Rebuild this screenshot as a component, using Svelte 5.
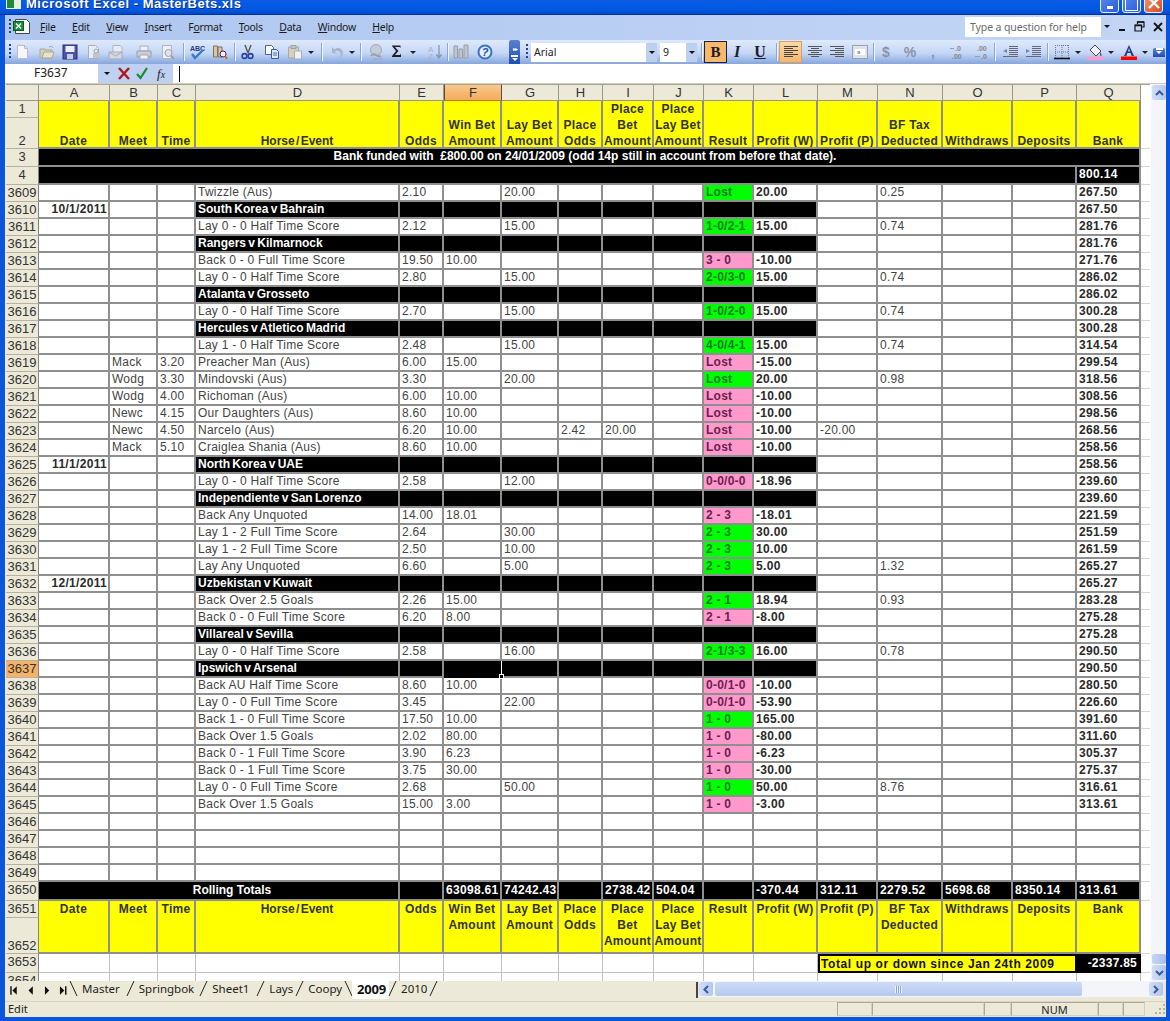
<script>
  const widths = [33, 71, 48, 38, 204, 44, 58, 57, 44, 51, 50, 50, 64, 60, 65, 70, 64, 64, 9];
  const letters = 'ABCDEFGHIJKLMNOPQ'.split('');
  const gridCols = widths.map((w) => w + 'px').join(' ');

  const heads = ['Date', 'Meet', 'Time', 'Horse / Event', 'Odds', 'Win Bet\nAmount', 'Lay Bet\nAmount', 'Place\nOdds', 'Place\nBet\nAmount', 'Place\nLay Bet\nAmount', 'Result', 'Profit (W)', 'Profit (P)', 'BF Tax\nDeducted', 'Withdraws', 'Deposits', 'Bank'];

  function bet(n, desc, odds, win, lay, result, tone, profit, tax, bank, x = {}) {
    return { n, cells: ['', x.meet ?? '', x.time ?? '', desc, odds, win, lay, x.pOdds ?? '', x.pBet ?? '', '', result, profit, x.pW ?? '', tax, '', '', bank], tone };
  }
  function match(n, name, bank, date = '') {
    return { n, match: true, cells: [date, '', '', name, '', '', '', '', '', '', '', '', '', '', '', '', bank] };
  }

  const rows = [
    bet(3609, 'Twizzle (Aus)', '2.10', '', '20.00', 'Lost', 'g', '20.00', '0.25', '267.50'),
    match(3610, 'South Korea v Bahrain', '267.50', '10/1/2011'),
    bet(3611, 'Lay 0 - 0 Half Time Score', '2.12', '', '15.00', '1-0/2-1', 'g', '15.00', '0.74', '281.76'),
    match(3612, 'Rangers v Kilmarnock', '281.76'),
    bet(3613, 'Back 0 - 0 Full Time Score', '19.50', '10.00', '', '3 - 0', 'p', '-10.00', '', '271.76'),
    bet(3614, 'Lay 0 - 0 Half Time Score', '2.80', '', '15.00', '2-0/3-0', 'g', '15.00', '0.74', '286.02'),
    match(3615, 'Atalanta v Grosseto', '286.02'),
    bet(3616, 'Lay 0 - 0 Half Time Score', '2.70', '', '15.00', '1-0/2-0', 'g', '15.00', '0.74', '300.28'),
    match(3617, 'Hercules v Atletico Madrid', '300.28'),
    bet(3618, 'Lay 1 - 0 Half Time Score', '2.48', '', '15.00', '4-0/4-1', 'g', '15.00', '0.74', '314.54'),
    bet(3619, 'Preacher Man (Aus)', '6.00', '15.00', '', 'Lost', 'p', '-15.00', '', '299.54', { meet: 'Mack', time: '3.20' }),
    bet(3620, 'Mindovski (Aus)', '3.30', '', '20.00', 'Lost', 'g', '20.00', '0.98', '318.56', { meet: 'Wodg', time: '3.30' }),
    bet(3621, 'Richoman (Aus)', '6.00', '10.00', '', 'Lost', 'p', '-10.00', '', '308.56', { meet: 'Wodg', time: '4.00' }),
    bet(3622, 'Our Daughters (Aus)', '8.60', '10.00', '', 'Lost', 'p', '-10.00', '', '298.56', { meet: 'Newc', time: '4.15' }),
    bet(3623, 'Narcelo (Aus)', '6.20', '10.00', '', 'Lost', 'p', '-10.00', '', '268.56', { meet: 'Newc', time: '4.50', pOdds: '2.42', pBet: '20.00', pW: '-20.00' }),
    bet(3624, 'Craiglea Shania (Aus)', '8.60', '10.00', '', 'Lost', 'p', '-10.00', '', '258.56', { meet: 'Mack', time: '5.10' }),
    match(3625, 'North Korea v UAE', '258.56', '11/1/2011'),
    bet(3626, 'Lay 0 - 0 Half Time Score', '2.58', '', '12.00', '0-0/0-0', 'p', '-18.96', '', '239.60'),
    match(3627, 'Independiente v San Lorenzo', '239.60'),
    bet(3628, 'Back Any Unquoted', '14.00', '18.01', '', '2 - 3', 'p', '-18.01', '', '221.59'),
    bet(3629, 'Lay 1 - 2 Full Time Score', '2.64', '', '30.00', '2 - 3', 'g', '30.00', '', '251.59'),
    bet(3630, 'Lay 1 - 2 Full Time Score', '2.50', '', '10.00', '2 - 3', 'g', '10.00', '', '261.59'),
    bet(3631, 'Lay Any Unquoted', '6.60', '', '5.00', '2 - 3', 'g', '5.00', '1.32', '265.27'),
    match(3632, 'Uzbekistan v Kuwait', '265.27', '12/1/2011'),
    bet(3633, 'Back Over 2.5 Goals', '2.26', '15.00', '', '2 - 1', 'g', '18.94', '0.93', '283.28'),
    bet(3634, 'Back 0 - 0 Full Time Score', '6.20', '8.00', '', '2 - 1', 'p', '-8.00', '', '275.28'),
    match(3635, 'Villareal v Sevilla', '275.28'),
    bet(3636, 'Lay 0 - 0 Half Time Score', '2.58', '', '16.00', '2-1/3-3', 'g', '16.00', '0.78', '290.50'),
    match(3637, 'Ipswich v Arsenal', '290.50'),
    bet(3638, 'Back AU Half Time Score', '8.60', '10.00', '', '0-0/1-0', 'p', '-10.00', '', '280.50'),
    bet(3639, 'Lay 0 - 0 Full Time Score', '3.45', '', '22.00', '0-0/1-0', 'p', '-53.90', '', '226.60'),
    bet(3640, 'Back 1 - 0 Full Time Score', '17.50', '10.00', '', '1 - 0', 'g', '165.00', '', '391.60'),
    bet(3641, 'Back Over 1.5 Goals', '2.02', '80.00', '', '1 - 0', 'p', '-80.00', '', '311.60'),
    bet(3642, 'Back 0 - 1 Full Time Score', '3.90', '6.23', '', '1 - 0', 'p', '-6.23', '', '305.37'),
    bet(3643, 'Back 0 - 1 Full Time Score', '3.75', '30.00', '', '1 - 0', 'p', '-30.00', '', '275.37'),
    bet(3644, 'Lay 0 - 0 Full Time Score', '2.68', '', '50.00', '1 - 0', 'g', '50.00', '8.76', '316.61'),
    bet(3645, 'Back Over 1.5 Goals', '15.00', '3.00', '', '1 - 0', 'p', '-3.00', '', '313.61'),
    ...[3646, 3647, 3648, 3649].map((n) => ({ n, cells: Array(17).fill('') }))
  ];

  const totals = ['', '63098.61', '74242.43', '', '2738.42', '504.04', '', '-370.44', '312.11', '2279.52', '5698.68', '8350.14', '313.61'];

  const icons = {
    new: '<path d="M2.5 1.5h7l3 3v10h-10z" fill="#f4f6fa" stroke="#b8bcc8"/><path d="M9.5 1.5v3h3" fill="none" stroke="#b8bcc8"/>',
    open: '<path d="M1 5h5l1 1h6v8H1z" fill="#d8cfa8" stroke="#a8a8a8"/><path d="M3 14l2-6h10l-2 6z" fill="#e8e2c8" stroke="#a8a8a8"/><path d="M10 3q3-2 4 1" fill="none" stroke="#9ab"/>',
    save: '<rect x="1" y="1" width="14" height="14" fill="#4a54a8" stroke="#2a2f70"/><rect x="3.5" y="2" width="9" height="6" fill="#eef"/><rect x="5" y="10" width="6" height="5" fill="#ccd"/>',
    perm: '<path d="M2.5 1.5h7l3 3v10h-10z" fill="#e8ecf4" stroke="#a8b0bc"/><path d="M7 9h7v5H7z" fill="#c0c4cc"/><circle cx="10" cy="7" r="2" fill="none" stroke="#a0a4b0"/>',
    email: '<path d="M5 1.5h7l2 2v6H5z" fill="#e8ecf4" stroke="#b0b4c0"/><path d="M1 8h13v7H1z" fill="#d4d8e0" stroke="#a8acb8"/><path d="M1 8l6.5 4L14 8" fill="none" stroke="#a8acb8"/>',
    print: '<path d="M4 2h8v5H4z" fill="#eef" stroke="#aab"/><path d="M1 7h14v6H1z" fill="#c8ccd4" stroke="#9a9ea8"/><path d="M4 11h8v4H4z" fill="#f2f4f8" stroke="#aab"/>',
    preview: '<path d="M2.5 1.5h9v13h-9z" fill="#eef1f6" stroke="#b0b4c0"/><circle cx="8.5" cy="9" r="3.5" fill="#dfe4ec" stroke="#9aa0ac"/><path d="M11 12l3 3" stroke="#9aa0ac" stroke-width="2"/>',
    spell: '<text x="1" y="7" font-size="7" font-weight="700" font-family="Liberation Sans" fill="#2a3a80">ABC</text><path d="M3 10l3 4 8-8" fill="none" stroke="#3878c8" stroke-width="2.4"/>',
    research: '<path d="M1.5 2h4v11h-4zM6 3h4v10H6z" fill="#d8c8a0" stroke="#807060"/><circle cx="11" cy="10" r="3" fill="#dff" stroke="#608"/><path d="M13 12l2 3" stroke="#a88020" stroke-width="2"/>',
    cut: '<path d="M5 1l3 8M11 1L8 9" stroke="#555" stroke-width="1.4"/><circle cx="4.5" cy="12" r="2.4" fill="none" stroke="#2840a8" stroke-width="1.6"/><circle cx="10.5" cy="12" r="2.4" fill="none" stroke="#2840a8" stroke-width="1.6"/>',
    copy: '<path d="M1.5 1.5h6l2 2v7h-8z" fill="#fff" stroke="#5060a0"/><path d="M7.5 5.5h5l2 2v7h-7z" fill="#dde8ff" stroke="#3858a8"/><path d="M9 9h4M9 11h4" stroke="#5068a8"/>',
    paste: '<path d="M1.5 3h10v11h-10z" fill="#d8d0b8" stroke="#a8a8a8"/><path d="M4 1.5h5v3H4z" fill="#c0c4cc" stroke="#a0a0a8"/><path d="M7.5 7h7v8h-7z" fill="#eef1f6" stroke="#a8b0bc"/>',
    undo: '<path d="M3 9V3l2.5 2.5Q9 3 12 5t1 7l-2 2q2-5-1-6.500T6 8l3 1.500z" fill="#a8b4c8"/>',
    link: '<circle cx="8" cy="6" r="5.500" fill="#c4ccd8" stroke="#a0a8b8"/><path d="M3 12q2-3 5-1t5 1" fill="none" stroke="#98a0b0" stroke-width="2"/><path d="M5 15h9" stroke="#a8b0bc" stroke-width="2"/>',
    sigma: '<path d="M1 1.500h8.500V4L8.500 3H4l3.500 4L4 11h5l1-1.500V13H1v-1l4-5-4-5z" fill="#222"/>',
    sort: '<text x="2" y="7.500" font-size="8" font-family="Liberation Sans" fill="#a8b0c0">A</text><text x="2" y="15" font-size="8" font-family="Liberation Sans" fill="#a8b0c0">Z</text><path d="M13 1v12M10.500 10.500l2.500 3.500 2.500-3.500" fill="none" stroke="#8c94a8" stroke-width="1.300"/>',
    chart: '<path d="M1 2h3.500v12H1zM6 5h3.500v9H6zM11 1h4v13h-4z" fill="#c0c4cc" stroke="#9a9ea8"/>',
    help: '<circle cx="8" cy="8" r="6.500" fill="#e4eefc" stroke="#3a70c8" stroke-width="2"/><text x="4.800" y="12" font-size="11" font-weight="700" font-style="italic" font-family="Liberation Sans" fill="#2050b0">?</text>',
    alignL: '<path d="M1 2.500h14M1 4.500h9M1 6.500h14M1 8.500h9M1 10.500h14M1 12.500h9" stroke="#444" fill="none"/>',
    alignC: '<path d="M1 2.500h14M4 4.500h8M1 6.500h14M4 8.500h8M1 10.500h14M4 12.500h8" stroke="#555" fill="none"/>',
    alignR: '<path d="M1 2.500h14M6 4.500h9M1 6.500h14M6 8.500h9M1 10.500h14M6 12.500h9" stroke="#555" fill="none"/>',
    merge: '<rect x=".5" y="1.500" width="15" height="13" fill="#dfe3ea" stroke="#9aa0ac"/><rect x="3" y="5" width="10" height="6" fill="#fff"/><text x="5" y="10" font-size="6" fill="#667" font-family="Liberation Sans">a</text>',
    incDec: '<text x="5" y="7" font-size="7" font-weight="700" font-family="Liberation Sans" fill="#888">.0</text><text x="2" y="15" font-size="7" font-weight="700" font-family="Liberation Sans" fill="#888">.00</text><path d="M0 4.500h4" stroke="#8aa0c0"/>',
    decDec: '<text x="3" y="7" font-size="7" font-weight="700" font-family="Liberation Sans" fill="#888">.00</text><text x="7" y="15" font-size="7" font-weight="700" font-family="Liberation Sans" fill="#888">.0</text><path d="M1 12.500h5" stroke="#8aa0c0"/>',
    outdent: '<path d="M7 2.500h9M7 4.500h9M7 6.500h9M7 8.500h9M7 10.500h9M1 12.500h15" stroke="#667" fill="none"/><path d="M5 5v4L1 7z" fill="#7088b0"/>',
    indent: '<path d="M7 2.500h9M7 4.500h9M7 6.500h9M7 8.500h9M7 10.500h9M1 12.500h15" stroke="#667" fill="none"/><path d="M1 5v4l4-2z" fill="#7088b0"/>',
    borders: '<path d="M1 1.500h14M1 8h14M1.500 1v13M8 1v13M14.500 1v13" stroke="#778" stroke-dasharray="1 1" fill="none"/><path d="M0 14.500h16" stroke="#111" stroke-width="1.600"/>',
    fill: '<path d="M8 1l6 6-5 5-6-6z" fill="#eef2fa" stroke="#445"/><path d="M13 8q2 2 1.500 3.500T13 11z" fill="#555"/><rect y="12.500" width="16" height="3.500" fill="#ff99cc"/>',
    color: '<path d="M8 1L3 12h2.400l1-3h3.200l1 3H13zM7 7.500L8 4l1 3.500z" fill="#2a3a80"/><rect y="12.500" width="16" height="3.500" fill="#f00"/>'
  };

  // [name, left x, right x] on the window; flow margins are derived from the gaps
  function place(list, start) {
    let prev = start;
    return list.map(([name, x0, x1]) => {
      const item = { name, w: x1 - x0, gap: x0 - prev };
      prev = x1;
      return item;
    });
  }

  const leftTools = place([
    ['grip', 9, 11], ['new', 16, 30], ['open', 39, 55], ['save', 62, 78], ['perm', 86, 102], ['email', 108, 124], ['print', 136, 152], ['preview', 160, 176], ['sep', 183, 184],
    ['spell', 189, 205], ['research', 212, 228], ['sep', 234, 235], ['cut', 241, 255], ['copy', 264, 280], ['paste', 287, 303], ['drop', 308, 314], ['sep', 321, 322],
    ['undo', 329, 345], ['drop', 349, 355], ['sep', 360, 361], ['link', 368, 384], ['sigma', 393, 405], ['drop', 410, 416], ['sort', 426, 442], ['sep', 447, 448], ['chart', 453, 469], ['help', 477, 493]
  ], 5);

  const rightTools = place([
    ['sep', 702, 703], ['bold', 705, 728], ['italic', 730, 746], ['under', 752, 770], ['sep', 777, 778], ['alignL', 780, 803], ['alignC', 808, 824], ['alignR', 830, 846], ['merge', 853, 869], ['sep', 874, 875],
    ['dollar', 881, 893], ['pct', 904, 918], ['comma', 930, 938], ['incDec', 950, 968], ['decDec', 975, 991], ['sep', 995, 996], ['outdent', 1002, 1020], ['indent', 1025, 1043], ['sep', 1048, 1049],
    ['borders', 1055, 1071], ['drop', 1076, 1082], ['fill', 1088, 1104], ['drop', 1109, 1115], ['color', 1122, 1138], ['drop', 1143, 1149]
  ], 698);

  const menus = [['F', 'ile'], ['E', 'dit'], ['V', 'iew'], ['I', 'nsert'], ['Fo', 'rmat', 1], ['T', 'ools'], ['D', 'ata'], ['W', 'indow'], ['H', 'elp']];
  // name, space left before the next slash
  const tabs = [['Master', 7], ['Springbok', 6], ['Sheet1', 8], ['Lays', 3], ['Coopy', 3], ['2009', 3], ['2010', 3]];
</script>

{#snippet tool(t)}
  {#if t.name === 'sep'}
    <span class="sep" style="margin-left:{t.gap}px"></span>
  {:else if t.name === 'grip'}
    <span class="grip" style="margin-left:{t.gap}px"></span>
  {:else if t.name === 'drop'}
    <span class="drop" style="margin-left:{t.gap}px;width:{t.w}px"></span>
  {:else if t.name === 'bold'}
    <span class="tool txt hot b" style="margin-left:{t.gap}px;width:{t.w}px">B</span>
  {:else if t.name === 'italic'}
    <span class="tool txt i" style="margin-left:{t.gap}px;width:{t.w}px">I</span>
  {:else if t.name === 'under'}
    <span class="tool txt u" style="margin-left:{t.gap}px;width:{t.w}px">U</span>
  {:else if t.name === 'dollar' || t.name === 'pct' || t.name === 'comma'}
    <span class="tool txt fade" style="margin-left:{t.gap}px;width:{t.w}px">{t.name === 'dollar' ? '$' : t.name === 'pct' ? '%' : ','}</span>
  {:else}
    <span class="tool" class:warm={t.name === 'alignL'} style="margin-left:{t.gap}px;width:{t.w}px">
      <svg width="16" height="16" viewBox="0 0 16 16">{@html icons[t.name]}</svg>
    </span>
  {/if}
{/snippet}

<div class="window">
  <header class="title">
    <svg class="app-icon" width="15" height="9" viewBox="0 7 15 9"><rect x="0" y="0" width="15" height="16" fill="#e8f0e0"/><rect x="1" y="7" width="7" height="8" fill="#1f8a3c"/></svg>
    <span class="title-text">Microsoft Excel - MasterBets.xls</span>
    <div class="win-btns">
      <span class="win-btn"><i class="min"></i></span>
      <span class="win-btn"><i class="max"></i></span>
      <span class="win-btn close">
        <svg width="14" height="10" viewBox="0 0 14 10"><path d="M2 -1l10 10M12 -1L2 9" stroke="#fff" stroke-width="2.400"/></svg>
      </span>
    </div>
  </header>

  <div class="inner">
    <nav class="menubar">
      <span class="grip menu-grip"></span>
      <svg class="doc-icon" width="18" height="17" viewBox="0 0 18 17">
        <path d="M2.500 1.500h11l3 3v11h-14z" fill="#f4f6f8" stroke="#445"/>
        <rect x="0.500" y="3.500" width="10" height="9" fill="#1f8a3c" stroke="#0c5a20"/>
        <path d="M3 5.500l5 5M8 5.500l-5 5" stroke="#fff" stroke-width="1.300"/>
      </svg>
      <div class="menus">
        {#each menus as m}
          <span class="menu">{#if m[2]}F<u>o</u>{m[1]}{:else}<u>{m[0]}</u>{m[1]}{/if}</span>
        {/each}
      </div>
      <div class="help-box">
        <span>Type a question for help</span>
        <span class="help-drop"><b class="tri"></b></span>
      </div>
      <div class="doc-btns">
        <i class="d-min"></i>
        <svg width="11" height="11" viewBox="0 0 11 11"><path d="M3.500 3V1H10v5H8M1 4h6.500v6H1z" fill="none" stroke="#111" stroke-width="1.200"/><path d="M3 1h7M1 4.500h6" stroke="#111" stroke-width="1.600"/></svg>
        <svg width="10" height="10" viewBox="0 0 10 10"><path d="M1 1l8 8M9 1L1 9" stroke="#111" stroke-width="1.800"/></svg>
      </div>
    </nav>

    <div class="toolbar">
      <div class="tools">
        {#each leftTools as t}{@render tool(t)}{/each}
      </div>
      <div class="chevrons"><span class="chev-top">▸▸</span><b class="chev-bar"></b><b class="tri white"></b></div>
      <div class="fontbar">
        <span class="grip"></span>
        <div class="combo font"><span>Arial</span><span class="combo-btn"><b class="tri"></b></span></div>
        <div class="combo size"><span>9</span><span class="combo-btn"><b class="tri"></b></span></div>
        <div class="tools tight">
          {#each rightTools as t}{@render tool(t)}{/each}
        </div>
        <div class="chevrons end"><b class="chev-bar"></b><b class="tri white"></b></div>
      </div>
    </div>

    <div class="formula">
      <div class="namebox">F3637</div>
      <div class="name-drop"><b class="tri"></b></div>
      <div class="fx-btns">
        <svg width="14" height="13" viewBox="0 0 14 13"><path d="M2 1l10 11M12 1L2 12" stroke="#b01818" stroke-width="2.400"/></svg>
        <svg width="14" height="13" viewBox="0 0 14 13"><path d="M2 7l3.500 4L12 1" fill="none" stroke="#1c8a2c" stroke-width="2.200"/></svg>
        <span class="fx">f<small>x</small></span>
      </div>
      <div class="entry"><span class="caret"></span></div>
    </div>

    <div class="sheet-area">
      <div class="sheet" style="grid-template-columns:{gridCols}">
        <div class="ch corner"></div>
        {#each letters as l}
          <div class="ch" class:active={l === 'F'}>{l}</div>
        {/each}
        <div class="ch none"></div>

        <div class="rh">1</div>
        {#each heads as h}
          <div class="c yellow head bottom span2"><span class="head-text" class:narrow={h.includes('/')}>{h}</span></div>
        {/each}
        <div class="c fill span2"></div>
        <div class="rh bottom-n">2</div>

        <div class="rh tall">3</div>
        <div class="c black banner funded tall wide">Bank funded with &nbsp;£800.00 on 24/01/2009 (odd 14p still in account from before that date).</div>
        <div class="c fill tall"></div>

        <div class="rh tall">4</div>
        <div class="c black span16 tall"></div>
        <div class="c black bold tall">800.14</div>
        <div class="c fill tall"></div>

        {#each rows as r}
          <div class="rh" class:hot-row={r.n === 3637}>{r.n}</div>
          {#each r.cells as v, i}
            <div
              class="c"
              class:black={r.match && i >= 3 && i <= 11}
              class:bold={(r.match && i === 3) || i === 11 || i === 16 || i === 0}
              class:fixture={r.match && i === 3}
              class:right={i === 0}
              class:res={i === 10 && r.tone}
              class:green={i === 10 && r.tone === 'g'}
              class:pink={i === 10 && r.tone === 'p'}
              class:sel={r.n === 3637 && i === 5}
            >{v}{#if r.n === 3637 && i === 5}<span class="handle"></span>{/if}</div>
          {/each}
          <div class="c fill"></div>
        {/each}

        <div class="rh t19">3650</div>
        <div class="c black banner rolling span4 t19">Rolling Totals</div>
        {#each totals as v}
          <div class="c black bold t19 total">{v}</div>
        {/each}
        <div class="c fill t19"></div>

        <div class="rh">3651</div>
        {#each heads as h}
          <div class="c yellow head span2"><span class="head-text" class:narrow={h.includes('/')}>{h}</span></div>
        {/each}
        <div class="c fill span2"></div>
        <div class="rh bottom-n">3652</div>

        <div class="rh t19">3653</div>
        {#each Array(12) as _}
          <div class="c thin t19"></div>
        {/each}
        <div class="c summary span4 t19">Total up or down since Jan 24th 2009</div>
        <div class="c sum-val t19">-2337.85</div>
        <div class="c fill t19"></div>

        <div class="rh">3654</div>
        {#each Array(17) as _}
          <div class="c thin"></div>
        {/each}
        <div class="c fill"></div>
      </div>

      <div class="vscroll">
        <span class="sb-btn"><svg width="9" height="6" viewBox="0 0 9 6"><path d="M1 5l3.500-3.500L8 5" fill="none" stroke="#3c5a96" stroke-width="2"/></svg></span>
        <span class="v-track"></span>
        <span class="v-thumb"></span>
        <span class="sb-btn"><svg width="9" height="6" viewBox="0 0 9 6"><path d="M1 1l3.500 3.500L8 1" fill="none" stroke="#3c5a96" stroke-width="2"/></svg></span>
      </div>
    </div>

    <div class="tabbar">
      <div class="tab-nav">
        <svg width="8" height="9" viewBox="0 0 8 9"><path d="M1 0v9" stroke="#111" stroke-width="1.500"/><path d="M7 0v9L2.500 4.500z" fill="#111"/></svg>
        <svg width="6" height="9" viewBox="0 0 6 9"><path d="M5 0v9L.5 4.500z" fill="#111"/></svg>
        <svg width="6" height="9" viewBox="0 0 6 9"><path d="M1 0v9l4.500-4.500z" fill="#111"/></svg>
        <svg width="8" height="9" viewBox="0 0 8 9"><path d="M7 0v9" stroke="#111" stroke-width="1.500"/><path d="M1 0v9l4.500-4.500z" fill="#111"/></svg>
      </div>
      <div class="tabs">
        {#each tabs as [t, pad], i}
          {#if i === 0}
            <svg class="slash" width="9" height="18" viewBox="0 0 9 18"><path d="M1 0l7 15" stroke="#222" fill="none"/></svg>
          {/if}
          <span class="tab" class:active={t === '2009'} style="padding-right:{pad}px">{t}</span>
          <svg class="slash" width="9" height="18" viewBox="0 0 9 18"><path d={t === 'Coopy' ? 'M1 0l7 15' : 'M8 0L1 15'} stroke="#222" fill="none"/></svg>
        {/each}
      </div>
      <span class="split"></span>
      <div class="hscroll">
        <span class="sb-btn h"><svg width="6" height="9" viewBox="0 0 6 9"><path d="M5 1L1.500 4.500 5 8" fill="none" stroke="#3c5a96" stroke-width="2"/></svg></span>
        <span class="h-thumb"><i></i></span>
        <span class="h-rest"></span>
        <span class="sb-btn h"><svg width="6" height="9" viewBox="0 0 6 9"><path d="M1 1l3.500 3.500L1 8" fill="none" stroke="#3c5a96" stroke-width="2"/></svg></span>
      </div>
    </div>

    <footer class="status">
      <span class="status-text">Edit</span>
      <div class="panes">
        <span class="pane p1"></span>
        <span class="pane p2"></span>
        <span class="pane p3"></span>
        <span class="pane p4">NUM</span>
        <span class="pane p5"></span>
        <span class="pane p6"></span>
        <svg class="size-grip" width="14" height="14" viewBox="0 0 14 14"><path d="M11 2h2v2h-2zM7 6h2v2H7zM11 6h2v2h-2zM3 10h2v2H3zM7 10h2v2H7zM11 10h2v2h-2z" fill="#b4b09e"/></svg>
      </div>
    </footer>
  </div>
</div>

<style>
  :global(body) {
    margin: 0;
    background: #0054e3;
  }

  .window {
    width: 1170px;
    height: 1021px;
    display: flex;
    flex-direction: column;
    overflow: hidden;
    background: #0a55dc;
    font-family: "Liberation Sans", Arial, sans-serif;
  }

  .title {
    height: 14px;
    flex: none;
    display: flex;
    align-items: flex-start;
    padding-left: 6px;
    background: linear-gradient(#0a5ce6, #0058e2 70%, #0449c8);
    border-bottom: 1px solid #0033a0;
    color: #fff;
    overflow: hidden;
  }

  .title-text {
    margin: -4px 0 0 5px;
    font: bold 13px/16px "Liberation Sans", Arial, sans-serif;
    letter-spacing: 0.5px;
    text-shadow: 1px 1px 0 #0a2a80;
  }

  .win-btns {
    margin: -6px 4px 0 auto;
    display: flex;
    gap: 3px;
    padding-right: 3px;
  }

  .win-btn {
    width: 19px;
    height: 19px;
    box-sizing: border-box;
    border: 1px solid #e8eefc;
    border-radius: 3px;
    background: linear-gradient(135deg, #5a8cf0, #2a5ad8);
    display: flex;
    align-items: center;
    justify-content: center;
  }

  .win-btn.close {
    background: linear-gradient(135deg, #f09a70, #d84a20);
  }

  .min {
    width: 6px;
    height: 3px;
    background: #fff;
    margin-top: 7px;
  }

  .max {
    width: 11px;
    height: 10px;
    border: 1px solid #fff;
    border-top-width: 2px;
    margin-top: 2px;
  }

  .inner {
    flex: 1;
    min-height: 0;
    margin: 0 4px 4px 5px;
    display: flex;
    flex-direction: column;
    background: #ece9d8;
  }

  .menubar {
    height: 25px;
    flex: none;
    box-sizing: border-box;
    padding-bottom: 2px;
    display: flex;
    align-items: center;
    background: linear-gradient(90deg, #aec6ef, #c3d6f6);
    color: #1a1a1a;
    font: 10.5px "Noto Sans", sans-serif;
    letter-spacing: -0.3px;
  }

  .menu-grip {
    margin-left: 4px;
  }

  .doc-icon {
    margin-left: 2px;
  }

  .menus {
    display: flex;
    margin-left: 9px;
    gap: 16.5px;
  }

  .help-box {
    margin-left: auto;
    width: 147px;
    height: 20px;
    box-sizing: border-box;
    display: flex;
    align-items: center;
    justify-content: space-between;
    padding-left: 5px;
    background: #fff;
    color: #6a6a6a;
    font-size: 10.5px;
    letter-spacing: -0.1px;
  }

  .help-drop {
    width: 11px;
    height: 100%;
    background: #c1d3f2;
    display: flex;
    align-items: center;
    justify-content: center;
  }

  .doc-btns {
    width: 54px;
    display: flex;
    align-items: center;
    gap: 8px;
    padding-left: 7px;
    box-sizing: border-box;
  }

  .d-min {
    width: 6px;
    height: 2px;
    background: #111;
    margin: 6px 1px 0 0;
  }

  .tri {
    display: block;
    width: 0;
    height: 0;
    border-left: 3px solid transparent;
    border-right: 3px solid transparent;
    border-top: 3px solid #111;
  }

  .tri.white {
    border-top-color: #fff;
  }

  .toolbar {
    height: 24px;
    flex: none;
    display: flex;
    background: linear-gradient(#dfe9fb, #c4d7f6 55%, #86a6dc);
    align-items: stretch;
  }

  .tools {
    display: flex;
    align-items: center;
    flex: none;
    width: 504px;
  }

  .tools.tight {
    width: auto;
  }

  .grip {
    display: block;
    width: 2px;
    height: 16px;
    flex: none;
    background: repeating-linear-gradient(#24448c 0 2px, transparent 2px 4px);
  }

  .sep {
    width: 1px;
    height: 18px;
    flex: none;
    background: #8aa6d6;
    box-shadow: 1px 0 0 #eef4ff;
  }

  .tool {
    height: 22px;
    flex: none;
    display: flex;
    align-items: center;
    justify-content: center;
    box-sizing: border-box;
  }

  .tool svg {
    display: block;
    overflow: visible;
  }

  .tool.warm {
    background: linear-gradient(#fbd9a8, #f7b56a);
    border: 1px solid #d8a060;
  }

  .txt {
    font-family: "Liberation Serif", serif;
    font-size: 16px;
    font-weight: 700;
    color: #1a1a30;
  }

  .hot {
    background: #f8b868;
    border: 1px solid #10205a;
    font-size: 15px;
  }

  .i {
    font-style: italic;
  }

  .u {
    text-decoration: underline;
  }

  .fade {
    font-family: "Liberation Sans", sans-serif;
    font-size: 14px;
    color: #8a93a8;
  }

  .drop {
    height: 3px;
    flex: none;
    box-sizing: border-box;
    border-left: 3px solid transparent;
    border-right: 3px solid transparent;
    border-top: 3px solid #222;
  }

  .chevrons {
    width: 11px;
    flex: none;
    display: flex;
    flex-direction: column;
    align-items: center;
    justify-content: flex-end;
    padding-bottom: 3px;
    box-sizing: border-box;
    background: linear-gradient(#5a82d0, #1f4db0);
    border-radius: 2px 2px 0 0;
    color: #fff;
  }

  .chevrons.end {
    width: 12px;
    margin-left: 5px;
  }

  .chev-top {
    font-size: 6px;
    line-height: 6px;
    margin-bottom: 3px;
    letter-spacing: -1px;
  }

  .chev-bar {
    display: block;
    width: 7px;
    height: 2px;
    background: #fff;
    margin-bottom: 1px;
  }

  .fontbar {
    flex: 1;
    display: flex;
    align-items: center;
    margin-left: 6px;
  }

  .combo {
    height: 19px;
    background: #fff;
    display: flex;
    align-items: center;
    justify-content: space-between;
    padding-left: 3px;
    box-sizing: border-box;
    font: 10.5px "Noto Sans", sans-serif;
    color: #222;
    flex: none;
  }

  .combo.font {
    width: 126px;
    margin-left: 3px;
  }

  .combo.size {
    width: 37px;
    margin-left: 3px;
  }

  .combo-btn {
    width: 11px;
    height: 100%;
    background: #bdd0f0;
    display: flex;
    align-items: center;
    justify-content: center;
  }

  .formula {
    height: 19px;
    flex: none;
    display: flex;
    align-items: stretch;
    background: #fff;
    border-bottom: 1px solid #d0cdbc;
    font: 12px "Noto Sans", sans-serif;
    color: #222;
  }

  .namebox {
    width: 93px;
    padding-left: 29px;
    box-sizing: border-box;
    line-height: 18px;
  }

  .name-drop {
    width: 17px;
    background: #bed1f2;
    display: flex;
    align-items: center;
    justify-content: center;
  }

  .fx-btns {
    width: 58px;
    background: #bed1f2;
    display: flex;
    align-items: center;
    gap: 4px;
    padding-left: 2px;
    box-sizing: border-box;
  }

  .fx {
    margin-left: 4px;
    font: italic 13px "Liberation Serif", serif;
    color: #222;
  }

  .fx small {
    font-size: 10px;
  }

  .entry {
    flex: 1;
    padding-left: 6px;
    display: flex;
    align-items: center;
  }

  .caret {
    width: 1px;
    height: 16px;
    background: #111;
  }

  .sheet-area {
    height: 897px;
    flex: none;
    display: flex;
    background: #fff;
    overflow: hidden;
    margin-left: 1px;
  }

  .sheet {
    width: 1145px;
    flex: none;
    display: grid;
    grid-template-rows: 17px 17px 31px 18px 18px repeat(41, 17px) 19px 17px 36px 19px 17px;
    align-content: start;
    font-size: 12px;
    color: #444;
    letter-spacing: 0.25px;
    overflow: hidden;
  }

  .ch {
    box-sizing: border-box;
    background: #ece9d8;
    border-top: 1px solid #a8a598;
    border-right: 1px solid #9a9788;
    border-bottom: 1px solid #9a9788;
    color: #333;
    font-size: 13px;
    letter-spacing: 0;
    text-align: center;
    line-height: 15px;
  }

  .ch.active {
    background: linear-gradient(#f9c88a, #f4ab5e);
    border-right-color: #5a5040;
    border-left: 1px solid #5a5040;
    border-bottom-color: #c07830;
  }

  .ch.none {
    border: 0;
    border-top: 1px solid #a8a598;
    background: #fff;
  }

  .rh {
    box-sizing: border-box;
    background: #ece9d8;
    border-right: 1px solid #85837a;
    border-bottom: 1px solid #b5b2a2;
    color: #333;
    font-size: 13px;
    letter-spacing: 0;
    text-align: center;
    line-height: 16px;
    overflow: hidden;
  }

  .rh.hot-row {
    background: #f6b268;
  }

  .rh.bottom-n {
    display: flex;
    align-items: flex-end;
    justify-content: center;
    line-height: 15px;
  }

  .c {
    box-sizing: border-box;
    border-right: 2px solid #8f8f8f;
    border-bottom: 2px solid #8f8f8f;
    padding-left: 2px;
    line-height: 14px;
    white-space: nowrap;
    overflow: hidden;
    position: relative;
  }

  .bold {
    font-weight: 700;
    color: #2a2a2a;
    letter-spacing: 0.32px;
  }

  .fixture {
    letter-spacing: 0;
    word-spacing: -1px;
  }

  .right {
    text-align: right;
    padding-right: 1px;
  }

  .black {
    background: #000;
    color: #fff;
  }

  .c.black.bold {
    color: #fff;
  }

  .tall {
    line-height: 15px;
  }

  .span2 {
    grid-row: span 2;
  }

  .span4 {
    grid-column: span 4;
  }

  .span16 {
    grid-column: span 16;
  }

  .wide {
    grid-column: span 17;
  }

  .banner {
    text-align: center;
    font-weight: 700;
    color: #fff;
    letter-spacing: 0;
  }

  .funded {
    padding: 0 8px 0 0;
  }

  .rolling {
    padding-left: 27px;
    line-height: 19px;
  }

  .total {
    line-height: 17px;
  }

  .yellow {
    background: #ff0;
  }

  .head {
    font-weight: 700;
    text-align: center;
    color: #333;
    padding-left: 0;
    letter-spacing: 0.32px;
  }

  .head-text {
    display: block;
    white-space: pre-line;
    line-height: 16px;
  }

  .head-text.narrow {
    letter-spacing: 0;
    word-spacing: -2px;
  }

  .bottom {
    display: flex;
    align-items: flex-end;
    justify-content: center;
  }

  .bottom .head-text {
    margin-bottom: -2px;
  }

  .res {
    font-weight: 700;
  }

  .green {
    background: #0f0;
    color: #137a24;
  }

  .pink {
    background: #ff99cc;
    color: #6a1f50;
  }

  .fill {
    border-right: 0;
    border-bottom: 1px solid #d6d6d6;
    padding: 0;
  }

  .thin {
    border-right: 1px solid #c0c0c0;
    border-bottom: 1px solid #c0c0c0;
  }

  .t19 {
    line-height: 16px;
  }

  .summary {
    background: #ff0;
    border: 2px solid #000;
    color: #111;
    font-weight: 700;
    letter-spacing: 0.6px;
    line-height: 16px;
    padding-left: 1px;
  }

  .sum-val {
    background: #000;
    color: #fff;
    font-weight: 700;
    text-align: right;
    padding-right: 2px;
    border-color: #000;
    line-height: 18px;
  }

  .sel {
    border-right: 1px solid #fff;
    border-bottom-color: #000;
    overflow: visible;
  }

  .handle {
    position: absolute;
    right: -3px;
    bottom: -3px;
    width: 5px;
    height: 5px;
    background: #000;
    border: 1px solid #fff;
    box-sizing: border-box;
    z-index: 1;
  }

  .vscroll {
    width: 16px;
    flex: none;
    display: flex;
    flex-direction: column;
    background: #f3f5fb;
  }

  .sb-btn {
    width: 14px;
    height: 15px;
    margin: 1px;
    flex: none;
    display: flex;
    align-items: center;
    justify-content: center;
    background: linear-gradient(90deg, #d2def6, #b3c7ee);
    border-radius: 2px;
  }

  .v-track {
    flex: 1;
  }

  .v-thumb {
    width: 14px;
    height: 10px;
    margin: 0 1px;
    flex: none;
    background: linear-gradient(90deg, #c5d5f4, #a8c0ee);
    border-radius: 2px;
  }

  .tabbar {
    height: 20px;
    flex: none;
    display: flex;
    align-items: flex-start;
    background: #ece9d8;
    border-bottom: 1px solid #d8d5c4;
  }

  .tab-nav {
    width: 62px;
    padding: 5px 0 0 5px;
    display: flex;
    gap: 10px;
    box-sizing: border-box;
    flex: none;
  }

  .tabs {
    width: 629px;
    flex: none;
    box-sizing: border-box;
    padding-left: 3px;
    display: flex;
    font: 11.5px/16px "Noto Sans", sans-serif;
    color: #222;
    white-space: nowrap;
    overflow: hidden;
  }

  .slash {
    flex: none;
    margin: 0 -1px;
  }

  .tab {
    padding-left: 5px;
  }

  .tab.active {
    background: #fff;
    font: bold 13px/16px "Noto Sans", sans-serif;
    letter-spacing: -0.2px;
    color: #111;
  }

  .split {
    width: 2px;
    height: 16px;
    margin-top: 1px;
    background: #444;
    flex: none;
  }

  .hscroll {
    flex: 1;
    height: 16px;
    margin: 0 3px 0 1px;
    display: flex;
    background: #f3f5fb;
  }

  .sb-btn.h {
    margin: 1px 0;
    height: 14px;
  }

  .h-thumb {
    width: 367px;
    margin: 1px 0 1px 2px;
    background: linear-gradient(#cddbf6, #b5c9f0);
    border-radius: 2px;
    display: flex;
    align-items: center;
    justify-content: center;
  }

  .h-thumb i {
    width: 7px;
    height: 7px;
    background: repeating-linear-gradient(90deg, #eef3fd 0 1px, #8aa4d6 1px 2px);
  }

  .h-rest {
    flex: 1;
  }

  .status {
    flex: 1;
    display: flex;
    align-items: flex-start;
    justify-content: space-between;
    font: 11px/14px "Noto Sans", sans-serif;
    color: #222;
    padding-left: 3px;
  }

  .panes {
    display: flex;
    height: 14px;
  }

  .pane {
    box-sizing: border-box;
    border: 1px solid #d4d0c0;
    border-left-color: #aca899;
    border-top-color: #aca899;
    text-align: center;
    line-height: 13px;
  }

  .p1 { width: 35px; }
  .p2 { width: 112px; }
  .p3 { width: 27px; }
  .p4 { width: 87px; }
  .p5 { width: 25px; }
  .p6 { width: 22px; }

  .size-grip {
    margin-left: 7px;
  }
</style>
